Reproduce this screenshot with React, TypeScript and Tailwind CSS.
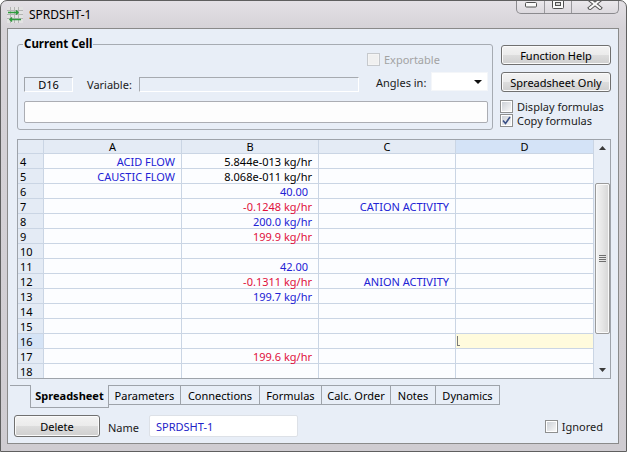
import React from 'react';

type Tone = 'blue' | 'red' | 'black';
type Cell = {t: string; tone: Tone; wide?: boolean};
type Row = {n: number; a?: Cell; b?: Cell; c?: Cell};

const tones: Record<Tone, string> = {
  blue: 'text-[#2222d4]',
  red: 'text-[#e0103c]',
  black: 'text-black',
};

const rows: Row[] = [
  {n: 4, a: {t: 'ACID FLOW', tone: 'blue'}, b: {t: '5.844e-013 kg/hr', tone: 'black'}},
  {n: 5, a: {t: 'CAUSTIC FLOW', tone: 'blue'}, b: {t: '8.068e-011 kg/hr', tone: 'black'}},
  {n: 6, b: {t: '40.00', tone: 'blue', wide: true}},
  {n: 7, b: {t: '-0.1248 kg/hr', tone: 'red'}, c: {t: 'CATION ACTIVITY', tone: 'blue'}},
  {n: 8, b: {t: '200.0 kg/hr', tone: 'blue'}},
  {n: 9, b: {t: '199.9 kg/hr', tone: 'red'}},
  {n: 10},
  {n: 11, b: {t: '42.00', tone: 'blue', wide: true}},
  {n: 12, b: {t: '-0.1311 kg/hr', tone: 'red'}, c: {t: 'ANION ACTIVITY', tone: 'blue'}},
  {n: 13, b: {t: '199.7 kg/hr', tone: 'blue'}},
  {n: 14},
  {n: 15},
  {n: 16},
  {n: 17, b: {t: '199.6 kg/hr', tone: 'red'}},
  {n: 18},
];

const tabs = [
  {label: 'Parameters', w: 'w-[72px]'},
  {label: 'Connections', w: 'w-[79px]'},
  {label: 'Formulas', w: 'w-[62px]'},
  {label: 'Calc. Order', w: 'w-[69px]'},
  {label: 'Notes', w: 'w-[45px]'},
  {label: 'Dynamics', w: 'w-[64px]'},
];

function Check({checked, disabled}: {checked?: boolean; disabled?: boolean}) {
  return (
    <span
      className={`relative flex h-[13px] w-[13px] shrink-0 items-center justify-center border ${
        disabled ? 'border-[#c6c9cd] bg-[#f4f4f4]' : 'border-[#8e8f8f] bg-white'
      }`}
    >
      <span
        className={`h-[9px] w-[9px] ${
          disabled ? 'bg-[#f0f0f0]' : 'bg-gradient-to-br from-[#cdd1d7] to-[#f7f7f7]'
        }`}
      />
      {checked && (
        <svg className="absolute left-[1px] top-[1px]" width="9" height="9" viewBox="0 0 9 9">
          <path d="M1 4.5 L3.5 7.5 L8 1" fill="none" stroke="#3a5086" strokeWidth="1.6" />
        </svg>
      )}
    </span>
  );
}

function Btn({children, className}: {children: React.ReactNode; className: string}) {
  return (
    <button
      className={`flex items-center justify-center rounded-[3px] border border-[#707070] bg-[linear-gradient(#f3f3f3_0%,#ebebeb_50%,#dddddd_51%,#cfcfcf_100%)] text-[11px] leading-none text-black shadow-[inset_0_0_0_1px_#fbfbfb] ${className}`}
    >
      {children}
    </button>
  );
}

function DataCell({cell}: {cell?: Cell}) {
  return (
    <div
      className={`flex h-[15px] items-center justify-end border-b border-r border-[#cad5e4] bg-[#fcfdff] text-[11px] leading-none ${
        cell?.wide ? 'pr-[10px]' : 'pr-[6px]'
      }`}
    >
      {cell && <span className={tones[cell.tone]}>{cell.t}</span>}
    </div>
  );
}

function TitleIcon() {
  return (
    <svg width="16" height="16" viewBox="0 0 16 16">
      <rect x="0" y="0" width="16" height="16" fill="#e2e2e2" />
      <path
        d="M0 3.5H16M0 7.5H16M0 11.5H16M3.5 0V16M7.5 0V16M11.5 0V16"
        stroke="#b4b4b4"
        strokeWidth="1"
      />
      <path d="M1 5.5H11M9 3.5L11 5.5L9 7.5" fill="none" stroke="#2e9a3c" strokeWidth="1.5" />
      <path d="M14 12.5H3M5 10.5L3 12.5L5 14.5" fill="none" stroke="#2e9a3c" strokeWidth="1.5" />
    </svg>
  );
}

export default function App() {
  return (
    <div className="flex h-[452px] w-[627px] flex-col overflow-hidden rounded-t-[7px] border border-[#5f5f5f] bg-[linear-gradient(180deg,#e3e0e5_0px,#d6d3d8_27px,#cfccd1_100%)] font-['Noto_Sans',sans-serif] text-black">
      {/* title bar */}
      <div className="flex h-[27px] shrink-0 items-center">
        <div className="ml-[6px] flex items-center gap-[6px]">
          <TitleIcon />
          <span className="text-[12px] leading-none text-black">SPRDSHT-1</span>
        </div>
        <div className="-mt-[7px] ml-auto mr-[7px] flex h-[20px] self-start overflow-hidden rounded-b-[5px] border border-t-0 border-[#8b8a8e] bg-[linear-gradient(#f2f0f3,#dcd9de)]">
          <div className="flex w-[28px] items-end justify-center border-r border-[#9a999d] pb-[5px]">
            <svg width="12" height="6" viewBox="0 0 12 6">
              <rect x="0.5" y="0.5" width="11" height="4.5" rx="1" fill="#fafafa" stroke="#505050" />
            </svg>
          </div>
          <div className="flex w-[27px] items-center justify-center border-r border-[#9a999d]">
            <svg width="12" height="10" viewBox="0 0 12 10">
              <rect x="0.5" y="0.5" width="11" height="9" rx="1" fill="#fafafa" stroke="#505050" />
              <rect x="3.5" y="3.5" width="5" height="3" fill="#d8d8d8" stroke="#505050" />
            </svg>
          </div>
          <div className="flex w-[46px] items-center justify-center">
            <svg width="16" height="12" viewBox="0 0 16 12">
              <path d="M3 2L13 10M13 2L3 10" stroke="#555" strokeWidth="4" strokeLinecap="square" />
              <path d="M3 2L13 10M13 2L3 10" stroke="#fafafa" strokeWidth="2" strokeLinecap="square" />
            </svg>
          </div>
        </div>
      </div>

      {/* client area */}
      <div className="mb-[7px] ml-[6px] mr-[7px] flex flex-1 flex-col border border-[#8a8a8a] bg-[#e8eef7] text-[11px] text-[#1a1a1a]">
        <div className="ml-[9px] mt-[15px] flex">
          {/* Current Cell group */}
          <div className="relative h-[86px] w-[476px] rounded-[3px] border border-[#a6abb2]">
            <span className="absolute -top-[9px] left-[5px] bg-[#e8eef7] px-[1px] text-[11.5px] font-bold leading-[16px] text-black">
              Current Cell
            </span>
            <div className="mt-[8px] flex h-[13px] items-center pl-[349px]">
              <Check disabled />
              <span className="ml-[4px] leading-none text-[#a3a3a3]">Exportable</span>
            </div>
            <div className="mt-[6px] flex h-[20px] items-start pl-[6px]">
              <div className="mt-[5px] flex h-[15px] w-[49px] items-center justify-center border border-b-white border-l-[#a0a4aa] border-r-white border-t-[#a0a4aa] leading-none text-black">
                D16
              </div>
              <span className="ml-[14px] mt-[5px] w-[52px] leading-[15px]">Variable:</span>
              <div className="mt-[5px] h-[15px] w-[220px] border border-b-white border-l-[#a6aab0] border-r-white border-t-[#a6aab0]" />
              <span className="ml-[17px] mt-[3px] w-[55px] leading-[15px]">Angles in:</span>
              <div className="flex h-[19px] w-[57px] items-center justify-end border border-[#f4f6f9] bg-white pr-[5px]">
                <svg width="8" height="4" viewBox="0 0 8 4">
                  <path d="M0 0H8L4 4Z" fill="#111" />
                </svg>
              </div>
            </div>
            <div className="ml-[6px] mt-[9px] h-[22px] w-[464px] rounded-[2px] border border-[#abadb3] bg-[#fdfdfd]" />
          </div>

          {/* side buttons */}
          <div className="ml-[8px] mt-[1px] flex w-[110px] flex-col">
            <Btn className="h-[20px] w-[110px]">Function Help</Btn>
            <Btn className="mt-[7px] h-[20px] w-[110px]">Spreadsheet Only</Btn>
            <div className="-ml-[1px] mt-[7px] flex h-[14px] items-center">
              <Check />
              <span className="ml-[4px] leading-none">Display formulas</span>
            </div>
            <div className="-ml-[1px] flex h-[14px] items-center">
              <Check checked />
              <span className="ml-[4px] leading-none">Copy formulas</span>
            </div>
          </div>
        </div>

        {/* spreadsheet grid */}
        <div className="ml-[9px] mt-[9px] flex h-[240px] w-[594px] border border-[#9ea3aa]">
          <div className="grid h-[238px] w-[576px] grid-cols-[26px_138px_137px_137px_138px] content-start overflow-hidden">
            <div className="h-[14px] border-b border-r border-[#cad5e4] bg-[#e4ebf5]" />
            {['A', 'B', 'C', 'D'].map((h) => (
              <div
                key={h}
                className={`flex h-[14px] items-center justify-center border-b border-r border-[#cad5e4] text-[11px] leading-none text-black ${
                  h === 'D' ? 'bg-[#d4e3f7]' : 'bg-[#e4ebf5]'
                }`}
              >
                {h}
              </div>
            ))}
            {rows.map((r) => (
              <React.Fragment key={r.n}>
                <div
                  className={`flex h-[15px] items-center border-b border-r border-[#cad5e4] pl-[2px] text-[11px] leading-none text-black ${
                    r.n === 16 ? 'bg-[#d6e4f6]' : 'bg-[#e4ebf5]'
                  }`}
                >
                  {r.n}
                </div>
                <DataCell cell={r.a} />
                <DataCell cell={r.b} />
                <DataCell cell={r.c} />
                {r.n === 16 ? (
                  <div className="relative h-[15px] border-b border-r border-[#cad5e4] bg-[#fffbdd]">
                    <span className="absolute left-[1px] top-[2px] h-[10px] w-[3px] border-b border-l border-[#7a7a7a]" />
                  </div>
                ) : (
                  <DataCell />
                )}
              </React.Fragment>
            ))}
          </div>

          {/* vertical scrollbar */}
          <div className="flex h-[238px] w-[16px] flex-col bg-[#e8eef7]">
            <div className="flex h-[16px] items-center justify-center">
              <svg width="7" height="4" viewBox="0 0 7 4">
                <path d="M0 4H7L3.5 0Z" fill="#3a3a3a" />
              </svg>
            </div>
            <div className="ml-[1px] mt-[27px] flex h-[151px] w-[15px] flex-col items-center justify-center gap-[1px] rounded-[2px] border border-[#9a9a9a] bg-[linear-gradient(90deg,#f4f4f4,#e6e6e6_50%,#d6d6d6)] shadow-[inset_0_0_0_1px_#fafafa]">
              <span className="h-[1px] w-[7px] bg-[#6e6e6e]" />
              <span className="h-[1px] w-[7px] bg-[#6e6e6e]" />
              <span className="h-[1px] w-[7px] bg-[#6e6e6e]" />
              <span className="h-[1px] w-[7px] bg-[#6e6e6e]" />
            </div>
            <div className="flex-1" />
            <div className="flex h-[16px] items-center justify-center">
              <svg width="7" height="4" viewBox="0 0 7 4">
                <path d="M0 0H7L3.5 4Z" fill="#3a3a3a" />
              </svg>
            </div>
          </div>
        </div>

        {/* tabs */}
        <div className="ml-[2px] mt-[6px] flex items-start text-[11px] leading-none text-black">
          <div className="h-[1px] w-[20px] bg-[#9ea3aa]" />
          <div className="flex h-[23px] w-[79px] items-center justify-center border-x border-b border-[#9ea3aa] pb-[1px] font-bold">
            Spreadsheet
          </div>
          {tabs.map((t) => (
            <div
              key={t.label}
              className={`flex h-[20px] items-center justify-center border-y border-r border-[#9ea3aa] ${t.w}`}
            >
              {t.label}
            </div>
          ))}
        </div>

        {/* bottom row */}
        <div className="ml-[6px] mt-[7px] flex items-center">
          <Btn className="h-[22px] w-[86px]">Delete</Btn>
          <span className="ml-[8px] w-[41px] pt-[2px] leading-none">Name</span>
          <div className="flex h-[22px] w-[149px] items-center rounded-[2px] border border-[#dde1e7] bg-white pl-[6px] leading-none text-[#2222c8]">
            SPRDSHT-1
          </div>
          <div className="ml-auto mr-[15px] flex items-center">
            <Check />
            <span className="ml-[4px] leading-none">Ignored</span>
          </div>
        </div>
      </div>
    </div>
  );
}
